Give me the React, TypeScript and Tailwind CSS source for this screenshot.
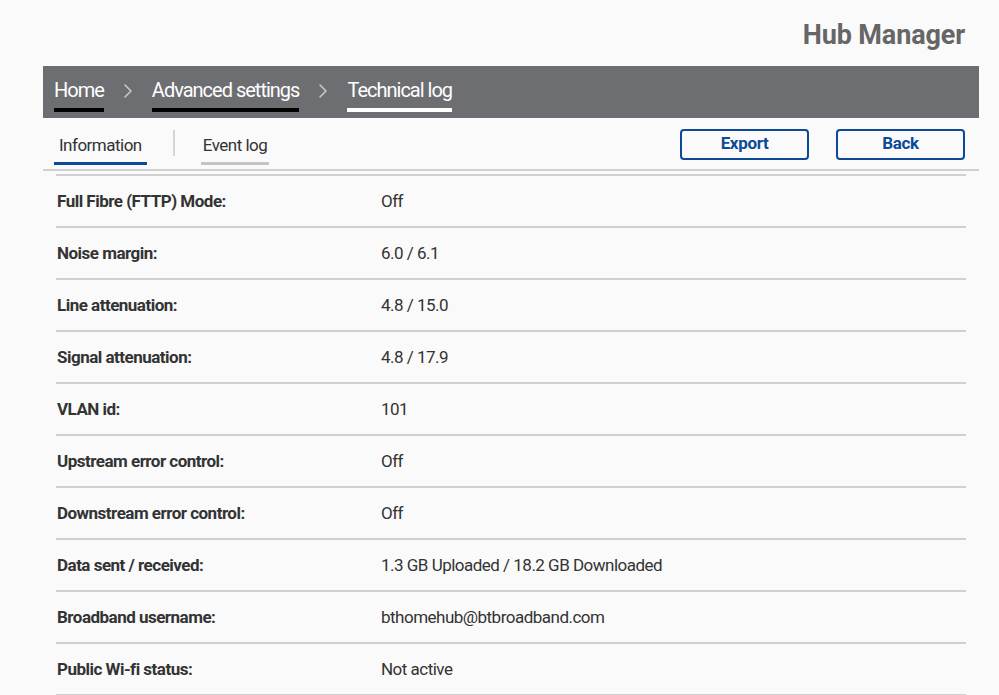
import { ChevronRight } from "lucide-react";

const rows: [string, string][] = [
  ["Full Fibre (FTTP) Mode:", "Off"],
  ["Noise margin:", "6.0 / 6.1"],
  ["Line attenuation:", "4.8 / 15.0"],
  ["Signal attenuation:", "4.8 / 17.9"],
  ["VLAN id:", "101"],
  ["Upstream error control:", "Off"],
  ["Downstream error control:", "Off"],
  ["Data sent / received:", "1.3 GB Uploaded / 18.2 GB Downloaded"],
  ["Broadband username:", "bthomehub@btbroadband.com"],
  ["Public Wi-fi status:", "Not active"],
];

const crumbs = [
  { label: "Home", bar: "bg-black" },
  { label: "Advanced settings", bar: "bg-black" },
  { label: "Technical log", bar: "bg-white" },
];

export default function App() {
  return (
    <div className="h-[695px] overflow-hidden bg-[#fafafa] font-['Roboto',sans-serif] text-[#333]">
      <div className="ml-[43px] w-[936px]">
        <div className="flex h-[66px] items-start justify-end pr-[14px] pt-[15px]">
          <h1 className="text-[27px] font-bold tracking-[-0.005em] text-[#666]">Hub Manager</h1>
        </div>

        <nav className="flex h-[52px] items-stretch bg-[#6d6e71] px-[11px]">
          {crumbs.map((c, i) => (
            <div key={c.label} className="flex items-stretch">
              {i > 0 ? (
                <div className="flex items-center px-[12px] pb-[2px]">
                  <ChevronRight className="h-[24px] w-[24px] text-[#c8c8c8]" strokeWidth={1.6} />
                </div>
              ) : null}
              <div className="flex flex-col justify-end">
                <span className="text-[20px] leading-[24px] tracking-[-0.05em] text-white">{c.label}</span>
                <div className={`mb-[6px] mt-[6px] h-[4px] ${c.bar}`} />
              </div>
            </div>
          ))}
        </nav>

        <div className="flex h-[53px] items-center justify-between border-b-2 border-[#d0d0d0] pl-[11px] pr-[14px]">
          <div className="flex items-center self-stretch">
            <div className="flex flex-col items-center pt-[11px]">
              <span className="px-[5px] text-[17px] leading-[22px] tracking-[-0.03em] text-[#333]">Information</span>
              <div className="mt-[6px] h-[3px] w-full bg-[#0c4a98]" />
            </div>
            <div className="mx-[26px] mb-[1px] h-[26px] w-[2px] bg-[#d5d5d5]" />
            <div className="flex flex-col items-center pt-[11px]">
              <span className="px-[2px] text-[17px] leading-[22px] tracking-[-0.03em] text-[#333]">Event log</span>
              <div className="mt-[6px] h-[3px] w-full bg-[#c4c4c4]" />
            </div>
          </div>
          <div className="mt-[1px] flex gap-[27px]">
            <button className="h-[31px] w-[129px] rounded-[4px] border-2 border-[#0c4a98] text-[17px] font-bold tracking-[-0.02em] text-[#0c4a98]">
              Export
            </button>
            <button className="h-[31px] w-[129px] rounded-[4px] border-2 border-[#0c4a98] text-[17px] font-bold tracking-[-0.02em] text-[#0c4a98]">
              Back
            </button>
          </div>
        </div>

        <div className="mx-[13px] mt-[3px] border-t-2 border-[#d0d0d0]">
          {rows.map(([k, v]) => (
            <div key={k} className="flex h-[52px] items-center border-b-2 border-[#d0d0d0] pl-[1px] pt-[1px]">
              <span className="w-[324px] text-[17px] font-bold tracking-[-0.03em] text-[#333]">{k}</span>
              <span className="text-[17px] tracking-[-0.03em] text-[#333]">{v}</span>
            </div>
          ))}
        </div>
      </div>
    </div>
  );
}
